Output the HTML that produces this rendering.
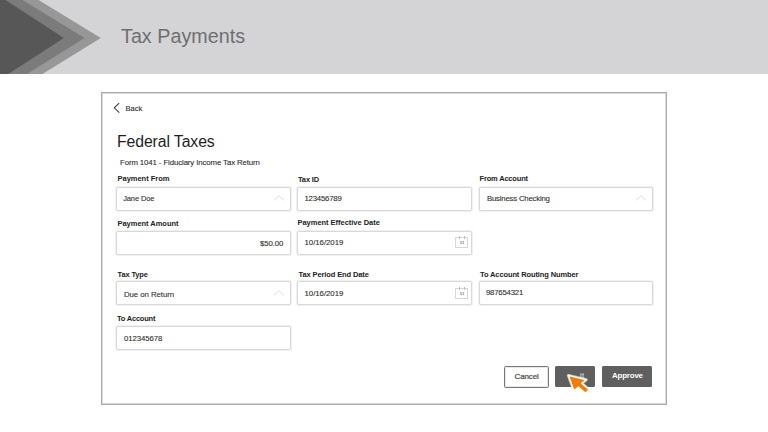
<!DOCTYPE html>
<html><head><meta charset="utf-8">
<style>
*{margin:0;padding:0;box-sizing:border-box}
html,body{width:768px;height:432px;overflow:hidden;background:#fff;font-family:"Liberation Sans",sans-serif;color:#333}
.a{position:absolute;white-space:nowrap;line-height:1}
#hdr{position:absolute;left:0;top:0;width:768px;height:74px;background:#d4d4d6}
#card{position:absolute;left:101px;top:92px;width:566px;height:313px;border:1px solid #ababab;box-shadow:inset 0 0 0 1px #d8d8d8}
.inp{position:absolute;height:24px;border:1px solid #d9d9d9;border-radius:2px;box-shadow:0 0 0 1px #f1f1f1,0 1px 1px rgba(0,0,0,0.05);background:#fff}
.c1{left:116px;width:175px}.c2{left:297px;width:175px}.c3{left:479px;width:174px}
.btn{position:absolute;border-radius:1.5px}
.cal{position:absolute;width:12.5px;height:10.5px;border:1px solid #d6d6d6}.cal:before,.cal:after{content:'';position:absolute;top:-2px;width:1px;height:3px;background:#bdbdbd}.cal:before{left:3px}.cal:after{left:8px}
.cal span{position:absolute;left:3.6px;top:2.6px;font-size:4.4px;line-height:1;color:#8a8a8a;font-weight:bold}
.chev{position:absolute}
</style></head><body>
<div id="hdr">
<svg width="110" height="74" style="position:absolute;left:0;top:0">
<polygon points="0,0 38.5,0 100.8,38 42.4,74 0,74" fill="#979797"/>
<polygon points="0,0 22.5,0 84.6,38 27,74 0,74" fill="#7b7b7b"/>
<polygon points="0,0 5.5,0 63.8,38 8.3,74 0,74" fill="#575757"/>
</svg>
</div>
<div id="card"></div>
<svg width="8" height="12" style="position:absolute;left:113px;top:102px"><polyline points="6.1,1.1 1.3,5.8 6.3,10.6" fill="none" stroke="#454545" stroke-width="1.15"/></svg>

<div class="inp c1" style="top:187px;height:24px"></div>
<div class="inp c2" style="top:187px;height:24px"></div>
<div class="inp c3" style="top:187px;height:24px"></div>
<div class="inp c1" style="top:231px;height:24px"></div>
<div class="inp c2" style="top:231px;height:24px"></div>
<div class="inp c1" style="top:281px;height:24px"></div>
<div class="inp c2" style="top:281px;height:24px"></div>
<div class="inp c3" style="top:281px;height:24px"></div>
<div class="inp c1" style="top:326px;height:24px"></div>

<svg class="chev" width="12" height="8" style="left:273px;top:193.5px"><polyline points="1,6.3 6,1.8 11,6.3" fill="none" stroke="#dedede" stroke-width="1"/></svg>
<svg class="chev" width="12" height="8" style="left:635px;top:193.5px"><polyline points="1,6.3 6,1.8 11,6.3" fill="none" stroke="#dedede" stroke-width="1"/></svg>
<svg class="chev" width="12" height="8" style="left:273px;top:288.5px"><polyline points="1,6.3 6,1.8 11,6.3" fill="none" stroke="#dedede" stroke-width="1"/></svg>

<div class="cal" style="left:455px;top:237px"><span>31</span></div>
<div class="cal" style="left:455px;top:288px"><span>31</span></div>

<div class="btn" style="left:504.3px;top:365.5px;width:44.5px;height:22px;border:1px solid #777;box-shadow:inset 0 0 0 0.5px #d0d0d0;background:#fff"></div>
<div class="btn" style="left:555.4px;top:366px;width:39.4px;height:21px;background:#5f5f5f"></div>
<div class="btn" style="left:601.6px;top:366px;width:50.6px;height:21.2px;background:#5f5f5f"></div>

<div class="a" id="title" style="left:121.00px;top:27.16px;font-size:19.7px;font-weight:400;color:#6e6e70;letter-spacing:0.036px">Tax Payments</div>
<div class="a" id="back" style="left:125.60px;top:104.99px;font-size:7.6px;font-weight:400;color:#2a2a2a;letter-spacing:-0.100px;-webkit-text-stroke:0.1px #2a2a2a">Back</div>
<div class="a" id="fed" style="left:117.00px;top:134.07px;font-size:15.8px;font-weight:400;color:#1e1e1e;letter-spacing:-0.100px">Federal Taxes</div>
<div class="a" id="form" style="left:120.00px;top:158.67px;font-size:7.8px;font-weight:400;color:#2a2a2a;letter-spacing:-0.100px;-webkit-text-stroke:0.1px #2a2a2a">Form 1041 - Fiduciary Income Tax Return</div>
<div class="a" id="l1" style="left:117.50px;top:175.42px;font-size:7.5px;font-weight:700;color:#222;letter-spacing:-0.018px">Payment From</div>
<div class="a" id="v1" style="left:123.20px;top:194.52px;font-size:7.5px;font-weight:400;color:#2e2e2e;letter-spacing:-0.129px;-webkit-text-stroke:0.1px #2e2e2e">Jane Doe</div>
<div class="a" id="l2" style="left:298.00px;top:175.93px;font-size:7.5px;font-weight:700;color:#222;letter-spacing:-0.160px">Tax ID</div>
<div class="a" id="v2" style="left:304.50px;top:194.67px;font-size:7.8px;font-weight:400;color:#2e2e2e;letter-spacing:-0.225px;-webkit-text-stroke:0.1px #2e2e2e">123456789</div>
<div class="a" id="l3" style="left:479.50px;top:175.42px;font-size:7.5px;font-weight:700;color:#222;letter-spacing:-0.182px">From Account</div>
<div class="a" id="v3" style="left:487.00px;top:194.97px;font-size:7.8px;font-weight:400;color:#2e2e2e;letter-spacing:-0.212px;-webkit-text-stroke:0.1px #2e2e2e">Business Checking</div>
<div class="a" id="l4" style="left:117.50px;top:219.62px;font-size:7.5px;font-weight:700;color:#222;letter-spacing:-0.031px">Payment Amount</div>
<div class="a" id="v4" style="left:260.00px;top:239.97px;font-size:7.8px;font-weight:400;color:#2e2e2e;letter-spacing:-0.120px;-webkit-text-stroke:0.1px #2e2e2e">$50.00</div>
<div class="a" id="l5" style="left:297.50px;top:219.22px;font-size:7.5px;font-weight:700;color:#222;letter-spacing:-0.029px">Payment Effective Date</div>
<div class="a" id="v5" style="left:304.50px;top:239.37px;font-size:7.8px;font-weight:400;color:#2e2e2e;letter-spacing:-0.022px;-webkit-text-stroke:0.1px #2e2e2e">10/16/2019</div>
<div class="a" id="l6" style="left:117.50px;top:270.52px;font-size:7.5px;font-weight:700;color:#222;letter-spacing:-0.143px">Tax Type</div>
<div class="a" id="v6" style="left:124.00px;top:290.67px;font-size:7.8px;font-weight:400;color:#2e2e2e;letter-spacing:-0.050px;-webkit-text-stroke:0.1px #2e2e2e">Due on Return</div>
<div class="a" id="l7" style="left:298.50px;top:271.33px;font-size:7.5px;font-weight:700;color:#222;letter-spacing:-0.111px">Tax Period End Date</div>
<div class="a" id="v7" style="left:304.50px;top:290.37px;font-size:7.8px;font-weight:400;color:#2e2e2e;letter-spacing:-0.022px;-webkit-text-stroke:0.1px #2e2e2e">10/16/2019</div>
<div class="a" id="l8" style="left:480.00px;top:271.42px;font-size:7.5px;font-weight:700;color:#222;letter-spacing:-0.117px">To Account Routing Number</div>
<div class="a" id="v8" style="left:486.00px;top:289.37px;font-size:7.8px;font-weight:400;color:#2e2e2e;letter-spacing:-0.225px;-webkit-text-stroke:0.1px #2e2e2e">987654321</div>
<div class="a" id="l9" style="left:117.00px;top:314.63px;font-size:7.5px;font-weight:700;color:#222;letter-spacing:-0.222px">To Account</div>
<div class="a" id="v9" style="left:124.00px;top:334.57px;font-size:7.8px;font-weight:400;color:#2e2e2e;letter-spacing:-0.075px;-webkit-text-stroke:0.1px #2e2e2e">012345678</div>
<div class="a" id="cancel" style="left:514.60px;top:373.10px;font-size:8.0px;font-weight:400;color:#4a4a4a;letter-spacing:-0.160px;-webkit-text-stroke:0.22px #4a4a4a">Cancel</div>
<div class="a" id="draft" style="left:580.00px;top:371.94px;font-size:7.6px;font-weight:400;color:#e6e6e6;letter-spacing:0.200px">it</div>
<div class="a" id="approve" style="left:612.00px;top:371.78px;font-size:7.9px;font-weight:700;color:#fff;letter-spacing:-0.167px">Approve</div>

<svg width="34" height="30" style="position:absolute;left:562px;top:368px" viewBox="562 368 34 30">
<path d="M568.4,375.4 L586.2,379.8 L581.6,383.2 L588.8,389.6 L585.6,393.2 L578.4,386.9 L574,390.8 Z" fill="none" stroke="#fff6dc" stroke-width="3" stroke-linejoin="round" opacity="0.7"/>
<path d="M568.4,375.4 L586.2,379.8 L581.6,383.2 L588.8,389.6 L585.6,393.2 L578.4,386.9 L574,390.8 Z" fill="#f27b0c" stroke="#fff" stroke-width="1.3" stroke-linejoin="round"/>
</svg>
</body></html>
